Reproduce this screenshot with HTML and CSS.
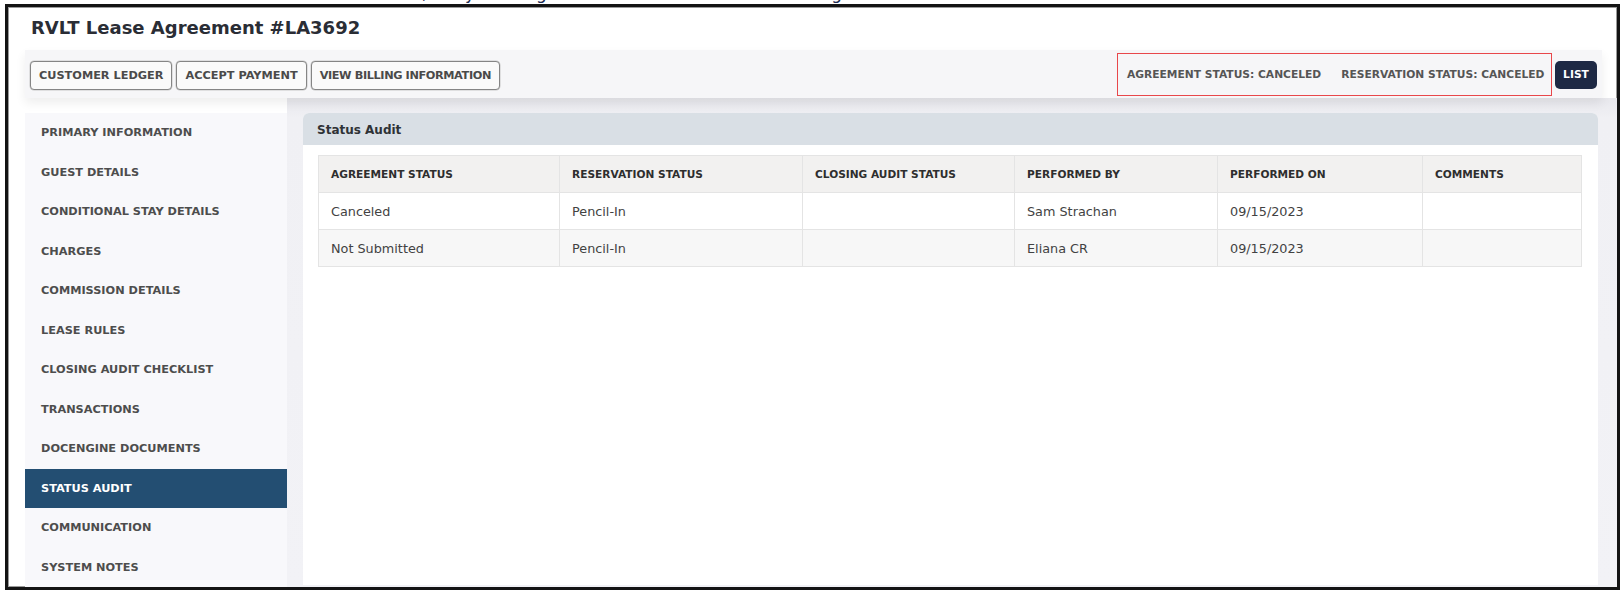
FILE: index.html
```html
<!DOCTYPE html>
<html lang="en">
<head>
<meta charset="utf-8">
<title>RVLT Lease Agreement #LA3692</title>
<link rel="stylesheet" href="styles.css">
</head>
<body>
<div class="topline">
  <span class="tw w1">Canceled,</span>
  <span class="tw w2">try</span>
  <span class="tw w3">using</span>
  <span class="tw w4">along</span>
</div>
<div class="frame">
  <header class="title-bar">
    <h1 class="title">RVLT Lease Agreement #LA3692</h1>
  </header>
  <div class="toolbar">
    <div class="actions">
      <button class="btn">CUSTOMER LEDGER</button>
      <button class="btn">ACCEPT PAYMENT</button>
      <button class="btn btn-tight">VIEW BILLING INFORMATION</button>
    </div>
    <div class="toolbar-right">
      <div class="status-box">
        <span class="status-item">AGREEMENT STATUS: CANCELED</span>
        <span class="status-item">RESERVATION STATUS: CANCELED</span>
      </div>
      <button class="btn-list">LIST</button>
    </div>
  </div>
  <div class="content">
    <nav class="sidebar">
      <a class="nav-item">PRIMARY INFORMATION</a>
      <a class="nav-item">GUEST DETAILS</a>
      <a class="nav-item">CONDITIONAL STAY DETAILS</a>
      <a class="nav-item">CHARGES</a>
      <a class="nav-item">COMMISSION DETAILS</a>
      <a class="nav-item">LEASE RULES</a>
      <a class="nav-item">CLOSING AUDIT CHECKLIST</a>
      <a class="nav-item">TRANSACTIONS</a>
      <a class="nav-item">DOCENGINE DOCUMENTS</a>
      <a class="nav-item active">STATUS AUDIT</a>
      <a class="nav-item">COMMUNICATION</a>
      <a class="nav-item">SYSTEM NOTES</a>
    </nav>
    <div class="main-wrap">
      <section class="panel">
        <div class="panel-head">Status Audit</div>
        <div class="panel-body">
          <table class="audit">
            <colgroup>
              <col class="c1"><col class="c2"><col class="c3"><col class="c4"><col class="c5"><col class="c6">
            </colgroup>
            <thead>
              <tr>
                <th>AGREEMENT STATUS</th>
                <th>RESERVATION STATUS</th>
                <th>CLOSING AUDIT STATUS</th>
                <th>PERFORMED BY</th>
                <th>PERFORMED ON</th>
                <th>COMMENTS</th>
              </tr>
            </thead>
            <tbody>
              <tr>
                <td>Canceled</td>
                <td>Pencil-In</td>
                <td></td>
                <td>Sam Strachan</td>
                <td>09/15/2023</td>
                <td></td>
              </tr>
              <tr class="alt">
                <td>Not Submitted</td>
                <td>Pencil-In</td>
                <td></td>
                <td>Eliana CR</td>
                <td>09/15/2023</td>
                <td></td>
              </tr>
            </tbody>
          </table>
        </div>
      </section>
    </div>
  </div>
</div>
</body>
</html>
```

FILE: styles.css
```css
* { box-sizing: border-box; }

html, body {
  margin: 0;
  padding: 0;
  background: #ffffff;
  font-family: "DejaVu Sans", "Liberation Sans", sans-serif;
}

.topline {
  height: 4px;
  overflow: hidden;
  display: flex;
  align-items: flex-start;
  padding-left: 343px;
}
.tw {
  display: block;
  flex: none;
  margin-top: -16px;
  font-size: 17px;
  line-height: 18px;
  color: #1d2b52;
  white-space: nowrap;
}
.w2 { margin-left: 24px; }
.w3 { margin-left: 26px; }
.w4 { margin-left: 248px; }

.frame {
  margin-left: 5px;
  width: 1615px;
  height: 586px;
  border: 3px solid #141414;
  box-shadow: inset 0 0 0 1px #9a9a9a;
  background: #ffffff;
  display: flex;
  flex-direction: column;
  overflow: hidden;
}

.title-bar {
  height: 43px;
  padding: 12px 0 0 23px;
  flex: none;
}
.title {
  margin: 0;
  font-size: 18px;
  line-height: 18px;
  font-weight: 700;
  color: #2a2d35;
}

.toolbar {
  flex: none;
  height: 48px;
  margin: 0 15px 0 17px;
  padding: 0 5px;
  background: #f6f6f8;
  display: flex;
  align-items: center;
  justify-content: space-between;
  box-shadow: 0 5px 10px rgba(0, 0, 0, 0.07);
  position: relative;
  z-index: 1;
}
.actions {
  display: flex;
  gap: 4px;
  padding-top: 2px;
}
.btn {
  height: 29px;
  padding: 0 8px;
  border: 1px solid #858585;
  border-radius: 4px;
  background: #fafafa;
  font-family: inherit;
  font-size: 11.3px;
  font-weight: 700;
  color: #4a4a4a;
  box-shadow: 0 0 0 0.5px #c8c8c8;
}
.btn-tight {
  letter-spacing: -0.4px;
}

.toolbar-right {
  display: flex;
  align-items: center;
  gap: 3px;
}
.status-box {
  height: 43px;
  width: 435px;
  border: 1.5px solid #e8474b;
  display: flex;
  align-items: center;
  gap: 20px;
  padding: 0 0 0 9px;
}
.status-item {
  font-size: 10.7px;
  font-weight: 700;
  color: #555;
  white-space: nowrap;
}
.btn-list {
  width: 42px;
  height: 28px;
  border: none;
  border-radius: 5px;
  background: #1e2944;
  color: #ffffff;
  font-family: inherit;
  font-size: 10.7px;
  font-weight: 700;
  padding: 0;
  margin-top: 1px;
}

.content {
  flex: 1;
  display: flex;
  padding-left: 17px;
  min-height: 0;
}

.sidebar {
  flex: none;
  width: 262px;
  margin-top: 15px;
  background: #f8f8fb;
  display: flex;
  flex-direction: column;
}
.nav-item {
  flex: none;
  height: 39.5px;
  display: flex;
  align-items: center;
  padding-left: 16px;
  font-size: 11.3px;
  font-weight: 700;
  color: #4d4d4d;
  white-space: nowrap;
}
.nav-item.active {
  background: #234e72;
  color: #ffffff;
}

.main-wrap {
  flex: 1;
  background: linear-gradient(#e8e8ed, #f0f0f4 20px, #f2f2f6);
  padding: 15px 20px 2px 16px;
  display: flex;
}

.panel {
  flex: 1;
  background: #ffffff;
  border-radius: 6px 6px 0 0;
  overflow: hidden;
}
.panel-head {
  height: 32px;
  background: #d9dfe5;
  padding: 2px 0 0 14px;
  display: flex;
  align-items: center;
  font-size: 12px;
  font-weight: 700;
  color: #2f3236;
}
.panel-body {
  padding: 10px 16px 0 15px;
}

.audit {
  width: 1263px;
  border-collapse: collapse;
  table-layout: fixed;
  border: 1px solid #e2e2e2;
}
.c1 { width: 241px; }
.c2 { width: 243px; }
.c3 { width: 212px; }
.c4 { width: 203px; }
.c5 { width: 205px; }
.c6 { width: 159px; }

.audit th,
.audit td {
  border: 1px solid #e4e4e4;
  text-align: left;
  padding: 0 0 0 12px;
  white-space: nowrap;
}
.audit th {
  height: 37px;
  background: #f2f1f0;
  font-size: 10.6px;
  font-weight: 700;
  color: #2e2e2e;
}
.audit td {
  height: 37px;
  font-size: 12.8px;
  color: #424242;
  background: #ffffff;
}
.audit tr.alt td {
  background: #f7f7f7;
}
```
